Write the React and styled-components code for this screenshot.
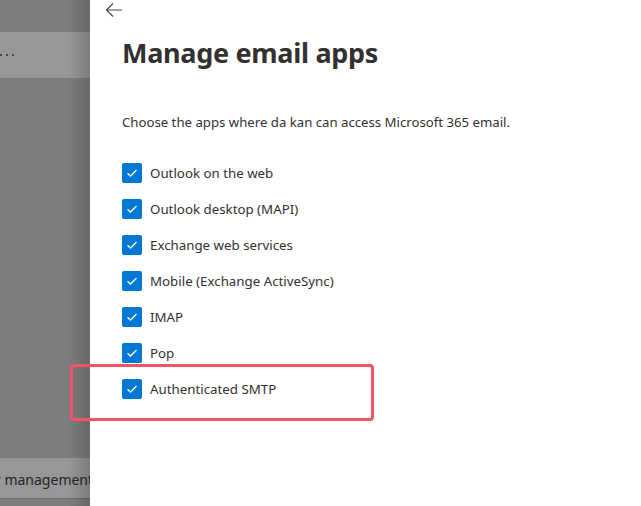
import React from "react";
import styled, { createGlobalStyle } from "styled-components";

const Global = createGlobalStyle`
  html, body { margin: 0; padding: 0; }
  body {
    width: 641px; height: 506px; overflow: hidden;
    font-family: "Noto Sans", "Open Sans", sans-serif;
    background: #7c7c7c;
  }
`;

const Page = styled.div`
  position: relative;
  display: flex;
  width: 641px;
  height: 506px;
  overflow: hidden;
`;

const Backdrop = styled.div`
  position: relative;
  width: 90px;
  flex: none;
  display: flex;
  flex-direction: column;
  overflow: hidden;
  background: #7d7d7d;
  &::after {
    content: "";
    position: absolute;
    top: 0; right: 0; bottom: 0;
    width: 22px;
    background: linear-gradient(to right, rgba(0,0,0,0), rgba(0,0,0,0.18));
  }
`;

const BackBand = styled.div`
  height: ${p => p.$h}px;
  margin-top: ${p => p.$top}px;
  background: #979797;
  border-bottom: ${p => (p.$line ? "1px solid #6e6e6e" : "none")};
  display: flex;
  align-items: center;
  box-sizing: border-box;
`;

const Dots = styled.div`
  display: flex;
  gap: 4px;
  span {
    width: 2px; height: 2px; border-radius: 50%;
    background: #22304a;
  }
`;

const BandText = styled.div`
  font-size: 14px;
  color: #1e2229;
  white-space: nowrap;
  margin-left: -5px;
  padding-top: 2px;
`;

const Panel = styled.div`
  flex: 1;
  background: #ffffff;
  padding: 0 0 0 32px;
  display: flex;
  flex-direction: column;
`;

const BackButton = styled.button`
  border: 0;
  background: transparent;
  padding: 0;
  margin: 2px 0 0 -17px;
  width: 18px;
  height: 16px;
  display: flex;
  align-items: center;
  cursor: pointer;
`;

const Title = styled.h1`
  margin: 17px 0 0 0;
  font-size: 27px;
  line-height: 36px;
  font-weight: 700;
  color: #323130;
  letter-spacing: -0.3px;
`;

const Description = styled.p`
  margin: 41px 0 0 0;
  font-size: 13.2px;
  line-height: 20px;
  color: #323130;
`;

const List = styled.div`
  display: flex;
  flex-direction: column;
  margin-top: 31px;
  gap: 16px;
`;

const Row = styled.label`
  display: flex;
  align-items: center;
  gap: 8px;
  height: 20px;
  font-size: 13.3px;
  color: #323130;
`;

const Box = styled.span`
  width: 20px;
  height: 20px;
  border-radius: 2px;
  background: #0078d4;
  display: flex;
  align-items: center;
  justify-content: center;
  flex: none;
`;

const Highlight = styled.div`
  position: absolute;
  left: 70px;
  top: 364px;
  width: 304px;
  height: 57px;
  border: 3px solid #f25467;
  border-radius: 4px;
  box-sizing: border-box;
  pointer-events: none;
`;

const apps = [
  "Outlook on the web",
  "Outlook desktop (MAPI)",
  "Exchange web services",
  "Mobile (Exchange ActiveSync)",
  "IMAP",
  "Pop",
  "Authenticated SMTP",
];

const Check = () => (
  <svg width="12" height="10" viewBox="0 0 12 10">
    <path d="M1.5 5.2 L4.5 8 L10.5 2" fill="none" stroke="#fff" strokeWidth="1.3" />
  </svg>
);

export default function App() {
  return (
    <>
      <Global />
      <Page>
        <Backdrop>
          <BackBand $top={32} $h={46}>
            <Dots><span /><span /><span /></Dots>
          </BackBand>
          <BackBand $top={380} $h={41} $line>
            <BandText>r management</BandText>
          </BackBand>
        </Backdrop>
        <Panel>
          <BackButton aria-label="Back">
            <svg width="18" height="16" viewBox="0 0 18 16">
              <path d="M8 1.5 L1.5 8 L8 14.5 M1.5 8 H17" fill="none" stroke="#444" strokeWidth="1.1" />
            </svg>
          </BackButton>
          <Title>Manage email apps</Title>
          <Description>Choose the apps where da kan can access Microsoft 365 email.</Description>
          <List>
            {apps.map(a => (
              <Row key={a}>
                <Box><Check /></Box>
                {a}
              </Row>
            ))}
          </List>
        </Panel>
        <Highlight />
      </Page>
    </>
  );
}
